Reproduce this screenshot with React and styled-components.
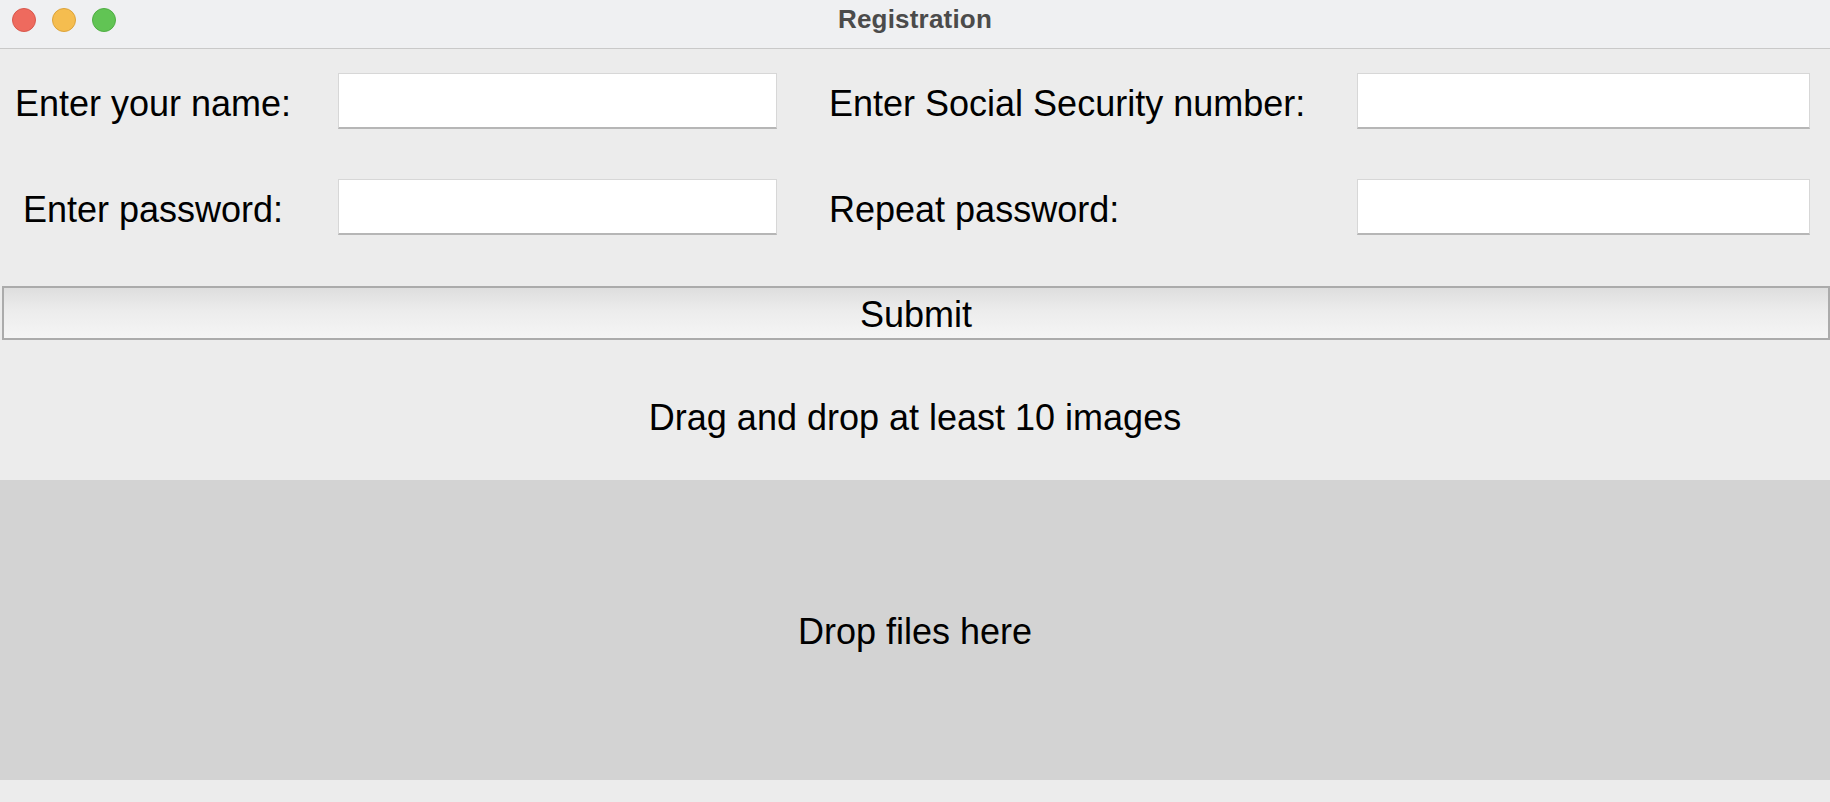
import React from "react";
import styled, { createGlobalStyle } from "styled-components";

const Global = createGlobalStyle`
  html, body { margin: 0; padding: 0; background: #ececec; }
  body { font-family: "Liberation Sans", Arial, sans-serif; }
  * { box-sizing: border-box; }
`;

const Window = styled.div`
  width: 1830px;
  height: 802px;
  display: flex;
  flex-direction: column;
  background: #ececec;
  overflow: hidden;
`;

const TitleBar = styled.div`
  height: 49px;
  flex: none;
  display: grid;
  grid-template-columns: 1fr auto 1fr;
  align-items: center;
  padding: 0 12px 8px;
  background: #eff0f2;
  border-bottom: 1px solid #c9c9c9;
`;

const Lights = styled.div`
  display: flex;
  gap: 16px;
`;

const Light = styled.span`
  width: 24px;
  height: 24px;
  border-radius: 50%;
  background: ${(p) => p.$bg};
  border: 1px solid ${(p) => p.$edge};
`;

const Title = styled.div`
  font-weight: bold;
  font-size: 26px;
  color: #4b4b4b;
  letter-spacing: 0.2px;
  margin-top: -2px;
`;

const Form = styled.div`
  display: grid;
  grid-template-columns: 338px 491px 528px 473px;
  grid-template-rows: 56px 56px;
  row-gap: 50px;
  align-items: center;
  padding: 24px 0 25px;
`;

const Label = styled.label`
  font-size: 36px;
  color: #000;
  white-space: nowrap;
  padding-top: 5px;
  text-align: ${(p) => (p.$center ? "center" : "left")};
  padding-right: ${(p) => (p.$center ? "32px" : "0")};
`;

const Field = styled.input`
  height: 56px;
  width: ${(p) => p.$w}px;
  background: #fff;
  border: 1px solid #d7d7d7;
  border-bottom: 2px solid #b6b6b6;
  outline: none;
  padding: 0 8px;
  font-size: 28px;
  font-family: inherit;
`;

const SubmitButton = styled.button`
  margin: 26px 0 0 2px;
  height: 54px;
  width: 1828px;
  border: 2px solid #ababab;
  background: linear-gradient(to bottom, #dedede 0%, #ececec 45%, #f5f5f5 100%);
  font-family: inherit;
  font-size: 36px;
  color: #000;
  padding: 4px 0 0;
`;

const Hint = styled.div`
  padding: 57px 0 42px;
  line-height: 41px;
  font-size: 36px;
  text-align: center;
  color: #000;
`;

const DropZone = styled.div`
  height: 300px;
  flex: none;
  background: #d3d3d3;
  display: flex;
  align-items: center;
  justify-content: center;
  padding-top: 4px;
  font-size: 36px;
  color: #000;
`;

export default function App() {
  return (
    <>
      <Global />
      <Window>
        <TitleBar>
          <Lights>
            <Light $bg="#ee6a5e" $edge="#d8574c" />
            <Light $bg="#f5bd4f" $edge="#dca33a" />
            <Light $bg="#61c454" $edge="#4fae43" />
          </Lights>
          <Title>Registration</Title>
          <div />
        </TitleBar>
        <Form>
          <Label $center>Enter your name:</Label>
          <Field $w={439} />
          <Label>Enter Social Security number:</Label>
          <Field $w={453} />
          <Label $center>Enter password:</Label>
          <Field $w={439} type="password" />
          <Label>Repeat password:</Label>
          <Field $w={453} type="password" />
        </Form>
        <SubmitButton>Submit</SubmitButton>
        <Hint>Drag and drop at least 10 images</Hint>
        <DropZone>Drop files here</DropZone>
      </Window>
    </>
  );
}
